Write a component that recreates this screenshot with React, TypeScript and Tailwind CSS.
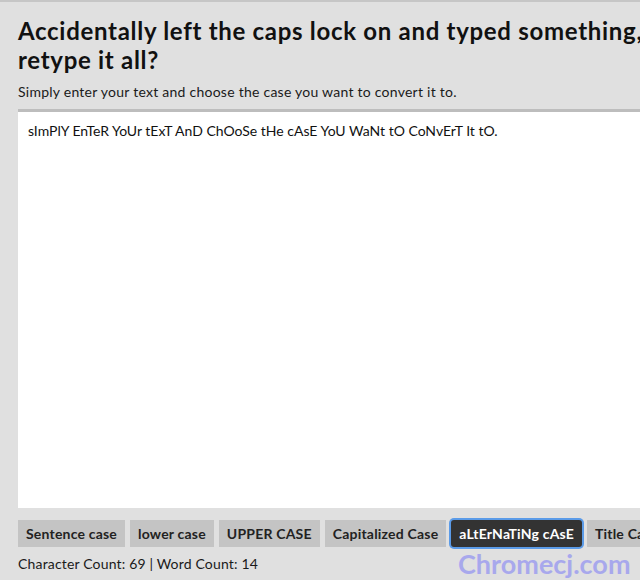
import React from "react";

const SAMPLE =
  "sImPlY EnTeR YoUr tExT AnD ChOoSe tHe cAsE YoU WaNt tO CoNvErT It tO.";

const CASES = [
  "Sentence case",
  "lower case",
  "UPPER CASE",
  "Capitalized Case",
  "aLtErNaTiNg cAsE",
  "Title Case",
];

export default function App() {
  return (
    <div className="relative h-[580px] w-[640px] overflow-hidden border-t-2 border-[#c6c6c6] bg-[#e0e0e0] font-['Lato','Liberation_Sans',sans-serif] text-[#1a1a1a]">
      <div className="w-[900px] px-[18px] pt-[14px]">
        <h1 className="whitespace-nowrap text-[24px] font-bold leading-[29px] tracking-[0.7px] text-[#111]">
          Accidentally left the caps lock on and typed something, but can't be
          bothered to start again and
          <br />
          retype it all?
        </h1>
        <p className="mt-[9px] text-[14px] leading-[18px] tracking-[0.25px]">
          Simply enter your text and choose the case you want to convert it to.
        </p>
        <textarea
          readOnly
          spellCheck={false}
          value={SAMPLE}
          className="mt-[8px] block h-[399px] w-full resize-none border-t-[3px] border-[#bdbdbd] bg-white px-[10px] py-[10px] text-[14px] leading-[18px] text-[#111] outline-none"
        />
        <div className="mt-[12px] flex gap-[5px]">
          {CASES.map((c) => {
            const active = c === "aLtErNaTiNg cAsE";
            return (
              <button
                key={c}
                type="button"
                className={
                  active
                    ? "h-[27px] rounded-[3px] bg-[#333] px-[8px] text-[14px] font-bold tracking-[0.2px] text-white ring-2 ring-[#5b9be8]"
                    : "h-[27px] bg-[#c4c4c4] px-[8px] text-[14px] font-bold tracking-[0.2px] text-[#222]"
                }
              >
                {c}
              </button>
            );
          })}
        </div>
        <p className="mt-[8px] text-[14px] leading-[18px] tracking-[0.17px]">
          Character Count: 69 | Word Count: 14
        </p>
      </div>
      <div className="pointer-events-none absolute left-[458px] top-[546px] text-[27px] font-bold leading-[32px] text-[#9b9bf0] opacity-80">
        Chromecj.com
      </div>
    </div>
  );
}
